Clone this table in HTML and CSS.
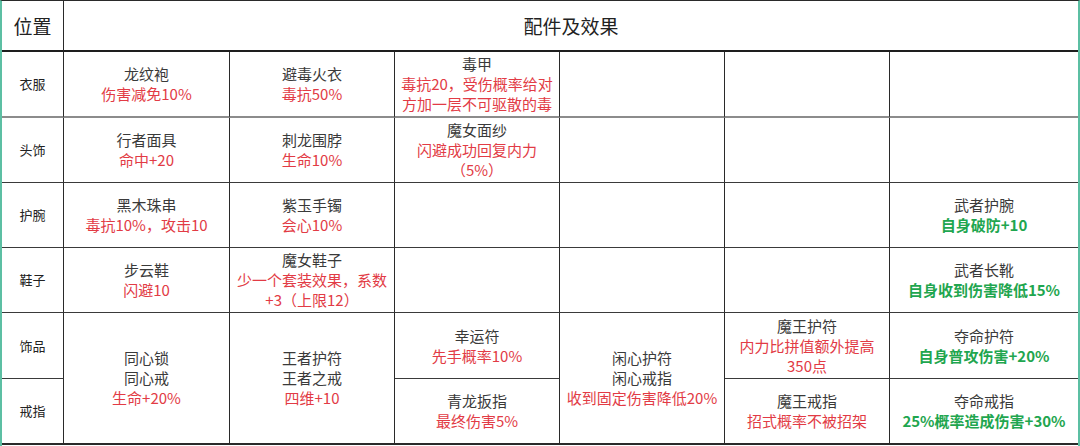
FILE: index.html
```html
<!DOCTYPE html>
<html lang="zh-CN">
<head>
<meta charset="utf-8">
<title>配件及效果</title>
<link rel="stylesheet" href="styles.css">
</head>
<body>
<div class="sheet">
  <div class="cell head pos">位置</div>
  <div class="cell head title span6">配件及效果</div>

  <div class="cell label r1">衣服</div>
  <div class="cell r1"><span class="name">龙纹袍</span><span class="red">伤害减免10%</span></div>
  <div class="cell r1"><span class="name">避毒火衣</span><span class="red">毒抗50%</span></div>
  <div class="cell r1"><span class="name">毒甲</span><span class="red">毒抗20，受伤概率给对方加一层不可驱散的毒</span></div>
  <div class="cell r1"></div>
  <div class="cell r1"></div>
  <div class="cell r1 last"></div>

  <div class="cell label">头饰</div>
  <div class="cell"><span class="name">行者面具</span><span class="red">命中+20</span></div>
  <div class="cell"><span class="name">刺龙围脖</span><span class="red">生命10%</span></div>
  <div class="cell"><span class="name">魔女面纱</span><span class="red">闪避成功回复内力<br>（5%）</span></div>
  <div class="cell"></div>
  <div class="cell"></div>
  <div class="cell last"></div>

  <div class="cell label">护腕</div>
  <div class="cell"><span class="name">黑木珠串</span><span class="red">毒抗10%，攻击10</span></div>
  <div class="cell"><span class="name">紫玉手镯</span><span class="red">会心10%</span></div>
  <div class="cell"></div>
  <div class="cell"></div>
  <div class="cell"></div>
  <div class="cell last"><span class="name">武者护腕</span><span class="green">自身破防+10</span></div>

  <div class="cell label">鞋子</div>
  <div class="cell"><span class="name">步云鞋</span><span class="red">闪避10</span></div>
  <div class="cell"><span class="name">魔女鞋子</span><span class="red">少一个套装效果，系数<br>+3（上限12）</span></div>
  <div class="cell"></div>
  <div class="cell"></div>
  <div class="cell"></div>
  <div class="cell last"><span class="name">武者长靴</span><span class="green">自身收到伤害降低15%</span></div>

  <div class="cell label">饰品</div>
  <div class="cell span2 bottom"><span class="name">同心锁</span><span class="name">同心戒</span><span class="red">生命+20%</span></div>
  <div class="cell span2 bottom"><span class="name">王者护符</span><span class="name">王者之戒</span><span class="red">四维+10</span></div>
  <div class="cell"><span class="name">幸运符</span><span class="red">先手概率10%</span></div>
  <div class="cell span2 bottom"><span class="name">闲心护符</span><span class="name">闲心戒指</span><span class="red">收到固定伤害降低20%</span></div>
  <div class="cell"><span class="name">魔王护符</span><span class="red">内力比拼值额外提高<br>350点</span></div>
  <div class="cell last"><span class="name">夺命护符</span><span class="green">自身普攻伤害+20%</span></div>

  <div class="cell label bottom">戒指</div>
  <div class="cell bottom"><span class="name">青龙扳指</span><span class="red">最终伤害5%</span></div>
  <div class="cell bottom"><span class="name">魔王戒指</span><span class="red">招式概率不被招架</span></div>
  <div class="cell last bottom"><span class="name">夺命戒指</span><span class="green">25%概率造成伤害+30%</span></div>
</div>
</body>
</html>
```
FILE: styles.css
```css
html, body {
  margin: 0;
  padding: 0;
  background: #ffffff;
}

.sheet {
  box-sizing: border-box;
  width: 1080px;
  height: 446px;
  border-left: 2px solid #5cbfa3;
  border-right: 2px solid #5cbfa3;
  border-top: 1px solid #2a2a2a;
  display: grid;
  grid-template-columns: 62px 166px 165px 165px 165px 165px 1fr;
  grid-template-rows: 51px 66px 65px 65px 65px 66px 66px;
  font-family: "Noto Sans CJK SC", "Liberation Sans", sans-serif;
  align-content: start;
}

.cell {
  box-sizing: border-box;
  border-right: 1px solid #2a2a2a;
  border-bottom: 1px solid #3a3a3a;
  display: flex;
  flex-direction: column;
  align-items: center;
  justify-content: center;
  text-align: center;
  font-size: 15px;
  line-height: 20px;
  padding: 0 4px;
}

.cell.last {
  border-right: none;
}

.head {
  border-bottom: 2px solid #1e1e1e;
  font-size: 19px;
  color: #222;
}

.head.title {
  grid-column: span 6;
  border-right: none;
}

.r1 {
  border-bottom: 2px solid #8c8c8c;
}

.label {
  font-size: 13px;
  color: #222;
}

.span2 {
  grid-row: span 2;
}

.bottom {
  border-bottom: 2px solid #2a2a2a;
}

.name {
  color: #3a3a3a;
  font-weight: 400;
}

.red {
  color: #e23b45;
}

.green {
  color: #1fa64f;
  font-weight: 700;
}
```
